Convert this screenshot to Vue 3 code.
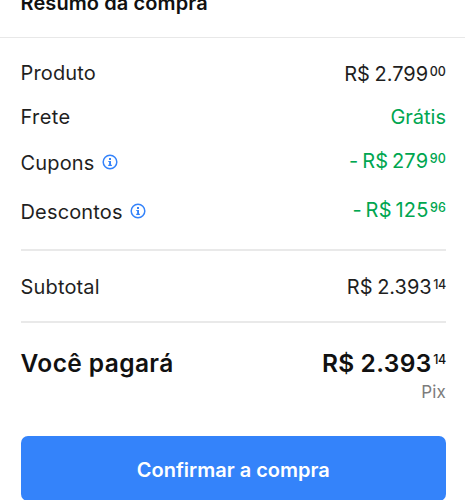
<script setup>
const rows = [
  { key: 'produto', label: 'Produto', value: 'R$ 2.799', cents: '00' },
  { key: 'frete', label: 'Frete', value: 'Grátis', green: true },
  { key: 'cupons', label: 'Cupons', value: '- R$ 279', cents: '90', green: true, info: true },
  { key: 'descontos', label: 'Descontos', value: '- R$ 125', cents: '96', green: true, info: true }
]
</script>

<template>
  <main class="summary">
    <header class="head"><h1 class="title">Resumo da compra</h1></header>
    <section class="rows">
      <div v-for="r in rows" :key="r.key" class="row" :class="r.key">
        <span class="name">
          <span class="label">{{ r.label }}</span>
          <svg v-if="r.info" class="info" viewBox="0 0 16 16">
            <circle cx="8" cy="8" r="6.8" fill="none" stroke="#3483fa" stroke-width="1.5" />
            <path d="M7 4.1h2v1.8H7zM6.3 6.9H9v3.9h.9v1.1H6.2v-1.1h.9V8h-.8z" fill="#3483fa" />
          </svg>
        </span>
        <span class="price" :class="{ green: r.green }">
          <span class="value">{{ r.value }}</span><span v-if="r.cents" class="cents">{{ r.cents }}</span>
        </span>
      </div>
    </section>
    <section class="row subtotal">
      <span class="label">Subtotal</span>
      <span class="price"><span class="value">R$ 2.393</span><span class="cents">14</span></span>
    </section>
    <section class="row total">
      <span class="label">Você pagará</span>
      <span class="price"><span class="value">R$ 2.393</span><span class="cents">14</span></span>
    </section>
    <p class="method">Pix</p>
    <button class="confirm" type="button"><span class="confirm-text">Confirmar a compra</span></button>
  </main>
</template>

<style>
body {
  background: #fff;
}
</style>

<style scoped>
.summary {
  height: 500px;
  overflow: hidden;
  font-family: Inter, "Liberation Sans", sans-serif;
  font-size: 20px;
  line-height: 24px;
  color: #1f1f1f;
}
.head {
  display: flex;
  height: 37px;
  border-bottom: 1px solid #e8e8e8;
}
.title {
  margin: -9px 0 0 20.5px;
  font-size: 20px;
  font-weight: 600;
  line-height: 24px;
  letter-spacing: 0.1px;
  color: #111;
}
.rows {
  box-sizing: border-box;
  margin: 0 19px 0 20.5px;
  padding-top: 23px;
  height: 213px;
  border-bottom: 2px solid #e9e9e9;
}
.row {
  display: flex;
  justify-content: space-between;
  align-items: flex-start;
  height: 24px;
  white-space: nowrap;
}
.label {
  letter-spacing: 0.16px;
}
.frete .label {
  letter-spacing: 0.4px;
}
.name {
  display: flex;
}
.info {
  width: 16px;
  height: 16px;
  margin: 3px 0 0 7.2px;
}
.price {
  display: flex;
}
.green {
  color: #00a650;
}
.value {
  letter-spacing: 0;
  word-spacing: -1px;
}
.cents {
  margin-left: 1.5px;
  font-size: 12.5px;
  line-height: 15px;
  font-weight: 500;
  letter-spacing: 0.1px;
  padding-top: 2px;
}
.produto .price { margin-top: 1px; }
.frete { margin-top: 20px; }
.cupons { margin-top: 22px; }
.descontos { margin-top: 25px; }
.cupons .price, .descontos .price { margin-top: -2px; }
.cupons .value, .descontos .value {
  letter-spacing: 0.22px;
  word-spacing: -2.2px;
}
.subtotal {
  margin: 0 19px 0 20.5px;
  padding-top: 24px;
  height: 46px;
  border-bottom: 2px solid #e9e9e9;
}
.subtotal .cents {
  letter-spacing: -0.3px;
}
.total {
  margin: 24px 19px 0 20.5px;
  height: 32px;
  font-size: 24.5px;
  line-height: 32px;
  font-weight: 600;
  color: #111;
}
.total .label {
  letter-spacing: 0.4px;
}
.total .value {
  letter-spacing: 0.35px;
  word-spacing: -0.5px;
}
.total .cents {
  padding-top: 5px;
  letter-spacing: -0.3px;
}
.method {
  margin: 1px 19px 0 0;
  text-align: right;
  font-size: 17px;
  line-height: 24px;
  letter-spacing: 0.2px;
  color: #7c7c7c;
}
.confirm {
  display: block;
  width: 425.5px;
  height: 65px;
  margin: 32px 0 0 20.5px;
  padding: 2px 0 0;
  border: 0;
  border-radius: 7px;
  background: #3483fa;
  color: #fff;
  font: 600 20px/24px Inter, "Liberation Sans", sans-serif;
}
</style>
